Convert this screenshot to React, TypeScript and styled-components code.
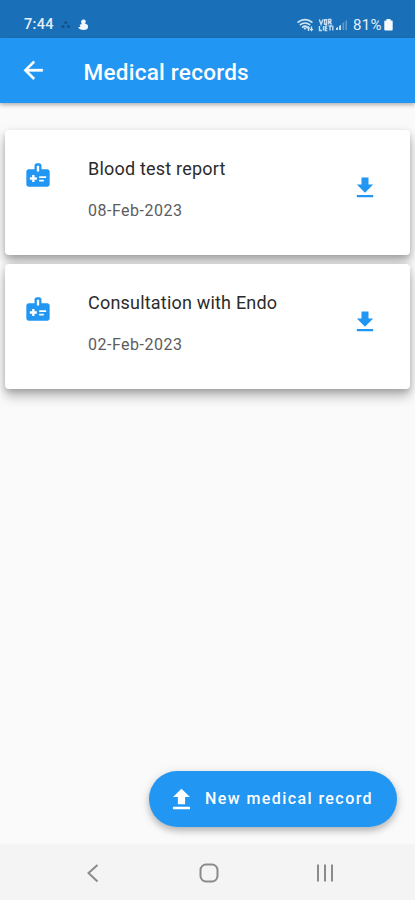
import React from "react";
import styled, { createGlobalStyle } from "styled-components";

const GlobalStyle = createGlobalStyle`
  * { box-sizing: border-box; }
  body { margin: 0; background: #fafafa; font-family: Roboto, sans-serif; }
`;

const Screen = styled.div`
  width: 415px;
  height: 900px;
  display: flex;
  flex-direction: column;
  background: #fafafa;
  overflow: hidden;
`;

const StatusBar = styled.div`
  height: 38px;
  flex: none;
  display: flex;
  align-items: center;
  padding: 12px 22px 0 24px;
  background: #1a70b8;
  color: #e3effa;
`;

const Clock = styled.span`
  width: 36px;
  font-size: 14.5px;
  font-weight: 500;
  letter-spacing: 0.3px;
  line-height: 18px;
`;

const StatusGlyphs = styled.svg`
  display: block;
  flex: none;
`;

const Spacer = styled.div`
  flex: 1;
`;

const Percent = styled.span`
  width: 31px;
  font-size: 15px;
  line-height: 18px;
  letter-spacing: 0.3px;
  white-space: nowrap;
`;

const AppBar = styled.header`
  height: 65px;
  flex: none;
  display: flex;
  align-items: center;
  padding: 0 19px;
  gap: 36px;
  background: #2196f3;
  color: #fff;
  box-shadow: 0 2px 4px rgba(0, 0, 0, 0.3);
`;

const Title = styled.h1`
  margin: 2px 0 0;
  font-size: 22.5px;
  font-weight: 500;
  letter-spacing: 0.25px;
  line-height: 28px;
`;

const Icon = styled.svg<{ $size: number }>`
  display: block;
  flex: none;
  width: ${(p) => p.$size}px;
  height: ${(p) => p.$size}px;
  fill: currentColor;
`;

const Records = styled.main`
  flex: 1;
  display: flex;
  flex-direction: column;
  gap: 9px;
  padding: 27px 5px 17px;
`;

const Card = styled.article`
  height: 125px;
  display: flex;
  align-items: flex-start;
  padding: 27px 31px 0 18px;
  border-radius: 4px;
  background: #fff;
  color: #2196f3;
  box-shadow: 0 8px 12px rgba(0, 0, 0, 0.2), 0 3px 12px rgba(0, 0, 0, 0.11), 0 3px 5px rgba(0, 0, 0, 0.12);
`;

const BadgeSlot = styled.div`
  width: 65px;
  padding: 4px 0 0 0.5px;
`;

const Details = styled.div`
  flex: 1;
`;

const RecordName = styled.div`
  font-size: 18px;
  line-height: 24px;
  letter-spacing: 0.2px;
  color: #2b2b2b;
`;

const RecordDate = styled.div`
  margin-top: 19px;
  font-size: 16px;
  line-height: 22px;
  letter-spacing: 0.5px;
  color: #5c5c5c;
`;

const DownloadButton = styled.button`
  margin: 17px 0 0;
  padding: 0;
  border: 0;
  background: none;
  color: inherit;
`;

const NewRecordButton = styled.button`
  align-self: flex-end;
  margin: auto 13px 0 0;
  width: 248px;
  height: 56px;
  flex: none;
  display: flex;
  align-items: center;
  padding: 0 0 0 18px;
  gap: 9px;
  border: 0;
  border-radius: 28px;
  background: #2196f3;
  color: #fff;
  font: 500 16px/20px Roboto, sans-serif;
  letter-spacing: 1.42px;
  white-space: nowrap;
  box-shadow: 0 4px 6px rgba(0, 0, 0, 0.2), 0 2px 12px rgba(0, 0, 0, 0.12);
`;

const NavBar = styled.nav`
  height: 56px;
  flex: none;
  display: flex;
  align-items: center;
  justify-content: space-between;
  padding: 2px 78px 0 81px;
  background: #f4f4f4;
`;

const NavIcon = styled.svg`
  display: block;
  width: 24px;
  height: 24px;
  fill: none;
  stroke: #8b8b8b;
  stroke-width: 2;
`;

const records = [
  { name: "Blood test report", date: "08-Feb-2023" },
  { name: "Consultation with Endo", date: "02-Feb-2023" },
];

function NotificationIcons() {
  return (
    <StatusGlyphs width="30" height="14" viewBox="0 0 30 14">
      <g fill="#155286">
        <circle cx="5.7" cy="4.5" r="1.5" />
        <circle cx="3" cy="8.5" r="1.6" />
        <circle cx="8.4" cy="8.5" r="1.6" />
      </g>
      <path
        fill="#f2f8fd"
        d="M21.5 2.500c1-1.600 4-1.400 4.300.8.1 1-.4 1.800-1.200 2.300 1.900.1 3.500 1.200 3.500 3.200 0 2.200-1.800 3.200-4.400 3.200-2.800 0-5-.8-5.600-2.900 1 .2 1.900 0 2.600-.5-.9-.5-1.100-1.400-.7-2.300.8.4 1.400.3 1.900-.2-.9-.9-1-2.500-.4-3.600z"
      />
    </StatusGlyphs>
  );
}

function SignalIcons() {
  return (
    <StatusGlyphs width="56" height="16" viewBox="0 0 56 16">
      <g fill="none" stroke="#d5e7f6" strokeWidth="1.7" strokeLinecap="round">
        <path d="M1.2 5.2C5 1.7 11 1.7 14.8 5.2" />
        <path d="M3.4 7.7c2.600-2.300 6.600-2.300 9.200 0" />
        <path d="M5.7 10.100c1.300-1.100 3.300-1.100 4.600 0" />
      </g>
      <path fill="#d5e7f6" d="M6.2 10.500h3.600L8 13zM11.500 9l2 2.500h-1.300V14h-1.400v-2.500H9.500zM14.500 14.500l-2-2.500h1.300V9.500h1.400V12h1.300z" />
      <g fill="none" stroke="#c6def2" strokeWidth="1.4">
        <path d="M22.300 2.500l1.800 5 1.800-5M27.500 2.700h2v4.500h-2zM31.500 7.500v-5h2.300v2.300h-2M32.500 5l2 2.500M22.500 9v4.500h2.500M26.500 9v4.500M28.300 9v4.500h2M28.300 9h2M28.300 11.200h2M33 9v4.500M31.600 9H35M35.800 8.500v5" />
      </g>
      <path fill="#c6def2" d="M39 13v-2l2-1v3zM42 13V9l2-1.200V13z" />
      <path fill="#5c99cd" d="M45.500 13V6l1.700-1V13zM48.400 13V4l1.600-1V13z" />
    </StatusGlyphs>
  );
}

function BackArrow() {
  return (
    <Icon $size={28.5} viewBox="0 0 24 24">
      <path d="M20 11H7.830l5.590-5.590L12 4l-8 8 8 8 1.410-1.410L7.830 13H20v-2z" stroke="currentColor" strokeWidth="0.3" />
    </Icon>
  );
}

function MedicalBadge() {
  return (
    <Icon $size={28} viewBox="0 0 24 24">
      <path d="M20 7h-5V4c0-1.100-.9-2-2-2h-2C9.900 2 9 2.900 9 4v3H4c-1.100 0-2 .9-2 2v11c0 1.100.9 2 2 2h16c1.100 0 2-.9 2-2V9c0-1.100-.9-2-2-2zM11 4h2v5h-2V4zm0 12H9v2H7v-2H5v-2h2v-2h2v2h2v2zm2-1.500V13h6v1.500h-6zm0 3V16h4v1.500h-4z" />
    </Icon>
  );
}

function DownloadIcon() {
  return (
    <Icon $size={28} viewBox="0 0 24 24">
      <path d="M19 9h-4V3H9v6H5l7 7 7-7zM5 18v2h14v-2H5z" />
    </Icon>
  );
}

function UploadIcon() {
  return (
    <Icon $size={29} viewBox="0 0 24 24">
      <path d="M9 16h6v-6h4l-7-7-7 7h4zm-4 2h14v2H5z" />
    </Icon>
  );
}

export default function App() {
  return (
    <>
      <GlobalStyle />
      <Screen>
        <StatusBar>
          <Clock>7:44</Clock>
          <NotificationIcons />
          <Spacer />
          <SignalIcons />
          <Percent>81%</Percent>
          <StatusGlyphs width="9" height="14" viewBox="0 0 9 14">
            <path fill="#f7fbff" d="M2.500 1h4v1.500H8a1 1 0 0 1 .7 1V11.500a1 1 0 0 1-1 1H1.300a1 1 0 0 1-1-1V3.500a1 1 0 0 1 1-1h1.200z" />
          </StatusGlyphs>
        </StatusBar>
        <AppBar>
          <BackArrow />
          <Title>Medical records</Title>
        </AppBar>
        <Records>
          {records.map((record) => (
            <Card key={record.date}>
              <BadgeSlot>
                <MedicalBadge />
              </BadgeSlot>
              <Details>
                <RecordName>{record.name}</RecordName>
                <RecordDate>{record.date}</RecordDate>
              </Details>
              <DownloadButton aria-label="Download">
                <DownloadIcon />
              </DownloadButton>
            </Card>
          ))}
          <NewRecordButton>
            <UploadIcon />
            New medical record
          </NewRecordButton>
        </Records>
        <NavBar>
          <NavIcon viewBox="0 0 24 24">
            <path d="M16.500 4L7.500 12l9 8.500" />
          </NavIcon>
          <NavIcon viewBox="0 0 24 24">
            <rect x="3.500" y="3.500" width="17" height="17" rx="5.500" />
          </NavIcon>
          <NavIcon viewBox="0 0 24 24">
            <path d="M5 3.500v17M12 3.500v17M19 3.500v17" />
          </NavIcon>
        </NavBar>
      </Screen>
    </>
  );
}
